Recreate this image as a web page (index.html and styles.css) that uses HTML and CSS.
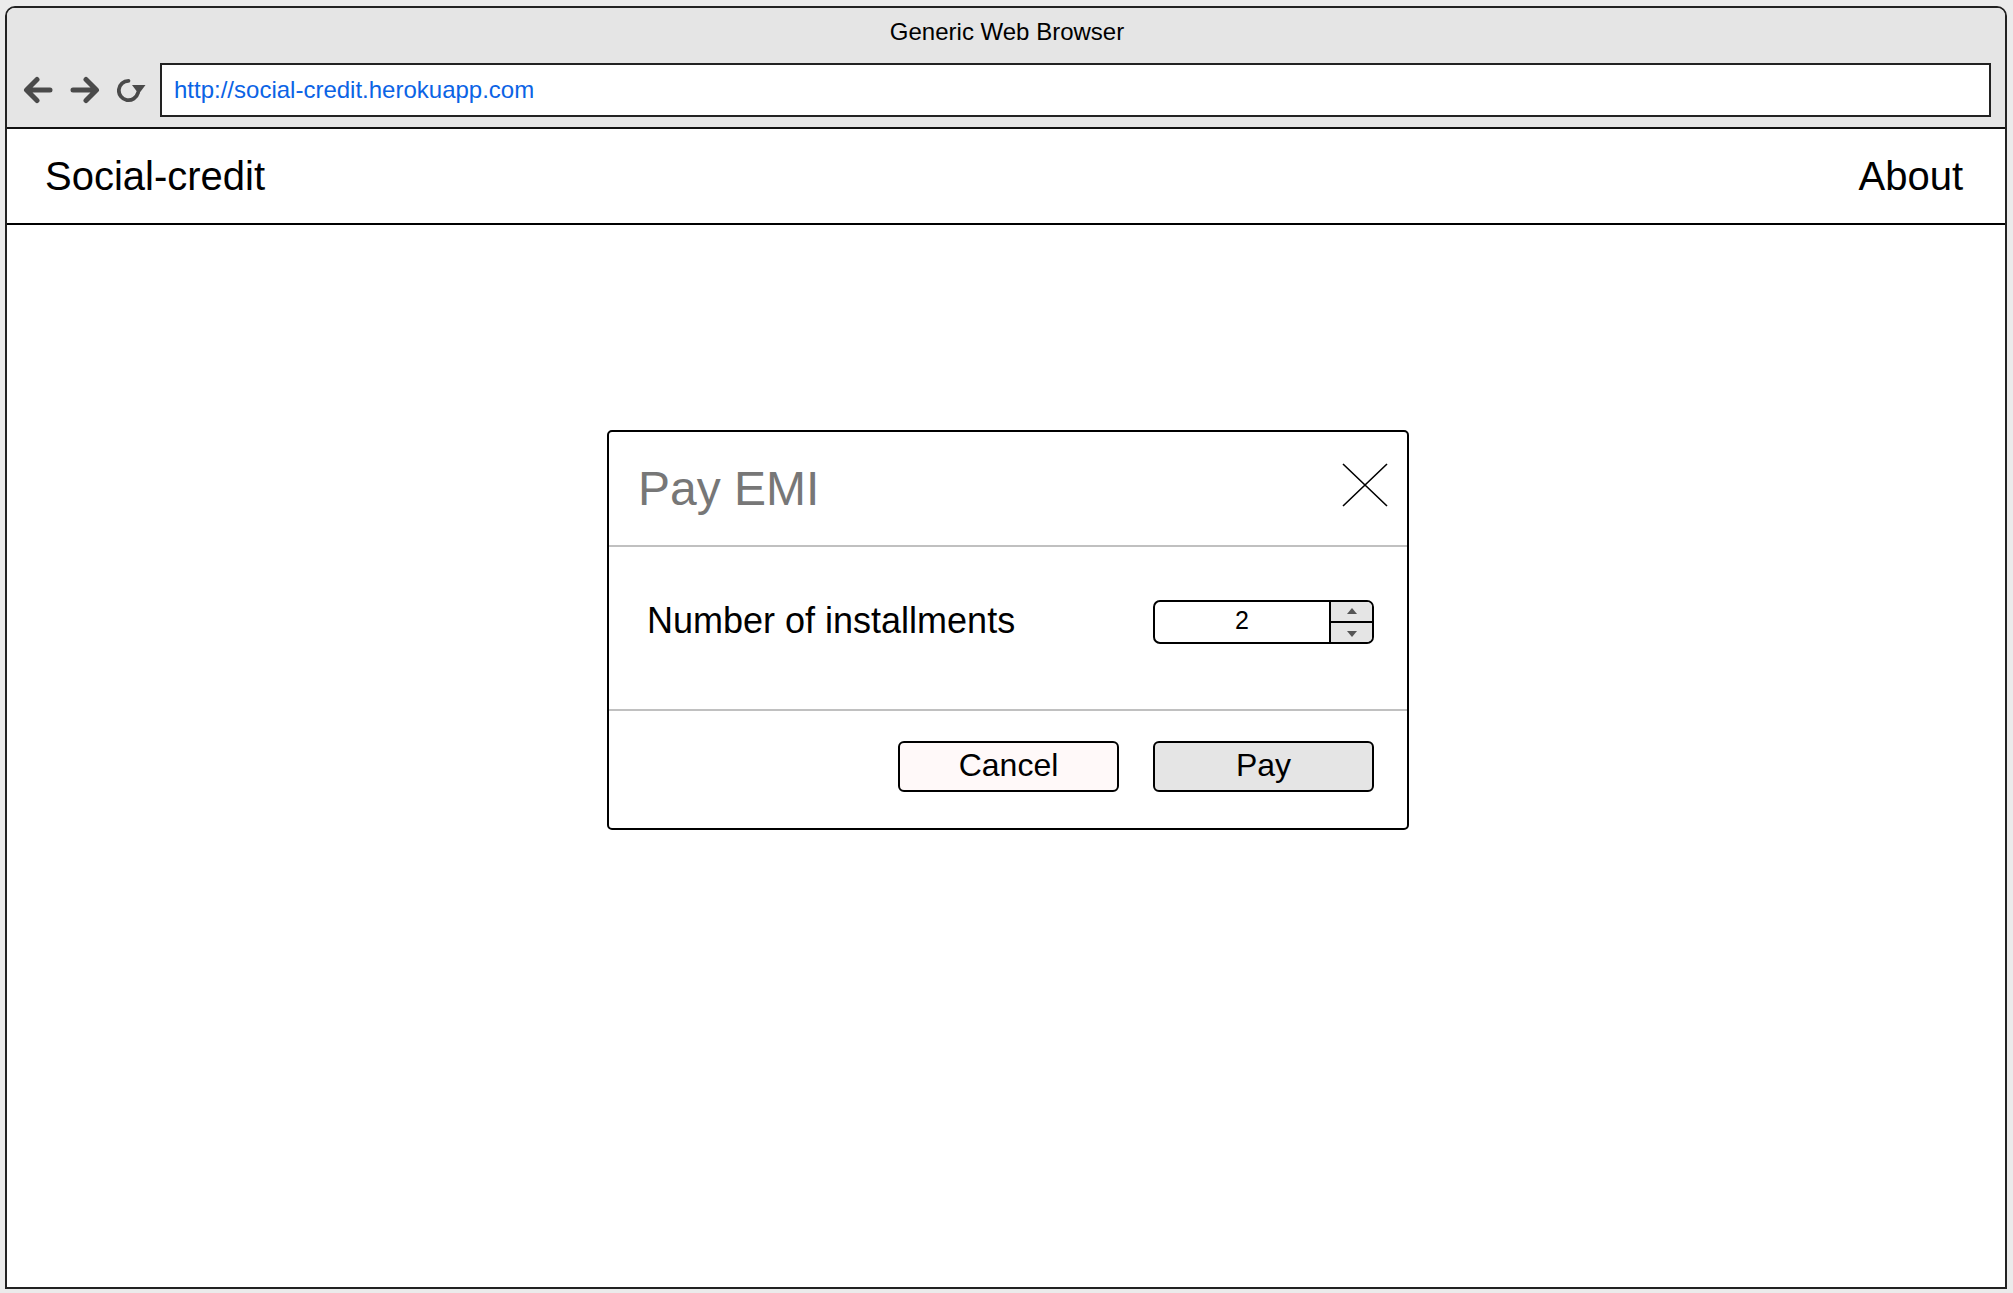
FILE: index.html
```html
<!DOCTYPE html>
<html lang="en">
<head>
<meta charset="utf-8">
<title>Social-credit</title>
<link rel="stylesheet" href="styles.css">
</head>
<body>
<div class="frame">
  <header class="titlebar">
    <div class="window-title">Generic Web Browser</div>
    <div class="toolbar">
      <svg class="nav-icon back" width="30" height="28" viewBox="0 0 30 28" aria-hidden="true">
        <path d="M27 14H4M14 3.5L3.5 14L14 24.5" fill="none" stroke="#4a4a4a" stroke-width="5" stroke-linecap="round" stroke-linejoin="round"/>
      </svg>
      <svg class="nav-icon fwd" width="31" height="28" viewBox="0 0 31 28" aria-hidden="true">
        <path d="M3 14H26M16 3.5L26.5 14L16 24.5" fill="none" stroke="#4a4a4a" stroke-width="5" stroke-linecap="round" stroke-linejoin="round"/>
      </svg>
      <svg class="nav-icon reload" width="30" height="25" viewBox="0 0 30 25" aria-hidden="true">
        <path d="M11.5 2.8A9.7 9.7 0 1 0 20.9 15" fill="none" stroke="#4a4a4a" stroke-width="3.8" stroke-linecap="round"/>
        <path d="M15 7L28.5 7L21.75 16Z" fill="#4a4a4a"/>
      </svg>
      <div class="address">http://social-credit.herokuapp.com</div>
    </div>
  </header>
  <nav class="navbar">
    <span class="brand">Social-credit</span>
    <span class="nav-link">About</span>
  </nav>
  <main class="content">
    <section class="dialog">
      <div class="dialog-head">
        <h1 class="dialog-title">Pay EMI</h1>
        <svg class="close" width="46" height="44" viewBox="0 0 46 44" aria-hidden="true">
          <path d="M1 1L45 43M45 1L1 43" stroke="#000" stroke-width="1.6" fill="none"/>
        </svg>
      </div>
      <div class="dialog-body">
        <span class="field-label">Number of installments</span>
        <div class="spinner">
          <span class="spin-value">2</span>
          <div class="spin-btns">
            <span class="spin-btn"><span class="tri up"></span></span>
            <span class="spin-btn"><span class="tri down"></span></span>
          </div>
        </div>
      </div>
      <div class="dialog-foot">
        <button class="btn btn-cancel">Cancel</button>
        <button class="btn btn-pay">Pay</button>
      </div>
    </section>
  </main>
</div>
</body>
</html>
```
FILE: styles.css
```css
* { box-sizing: border-box; }

html, body {
  margin: 0;
  height: 1293px;
}

body {
  background: #ebebeb;
  padding: 6px 6px 4px 5px;
  font-family: "Liberation Sans", Arial, Helvetica, sans-serif;
  color: #000;
}

.frame {
  height: 100%;
  border: 2px solid #222;
  border-radius: 10px 10px 0 0;
  background: #fff;
  display: flex;
  flex-direction: column;
  overflow: hidden;
}

.titlebar {
  background: #e5e5e5;
  height: 121px;
  border-bottom: 2px solid #111;
  padding: 12px 14px 10px 16px;
  flex: none;
}

.window-title {
  font-size: 24px;
  line-height: 24px;
  text-align: center;
  margin-bottom: 19px;
}

.toolbar {
  display: flex;
  align-items: center;
  height: 54px;
}

.nav-icon { display: block; flex: none; }
.back { margin-right: 17px; }
.fwd { margin-right: 16px; }
.reload { margin-right: 13px; }

.address {
  flex: 1;
  height: 54px;
  border: 2px solid #222;
  background: #fff;
  display: flex;
  align-items: center;
  padding-left: 12px;
  font-size: 24px;
  line-height: 24px;
  color: #0b63e5;
}

.navbar {
  flex: none;
  height: 96px;
  border-bottom: 2px solid #000;
  display: flex;
  align-items: center;
  justify-content: space-between;
  padding: 0 42px 0 38px;
  font-size: 40px;
  line-height: 40px;
}

.content {
  flex: 1;
  padding: 205px 0 0 600px;
}

.dialog {
  width: 802px;
  height: 400px;
  border: 2px solid #000;
  border-radius: 5px;
  display: flex;
  flex-direction: column;
}

.dialog-head {
  height: 115px;
  border-bottom: 2px solid #c0c0c0;
  display: flex;
  align-items: center;
  justify-content: space-between;
  padding: 0 19px 0 29px;
}

.dialog-title {
  margin: 0;
  font-weight: normal;
  font-size: 48px;
  line-height: 48px;
  color: #777;
}

.close {
  display: block;
  margin-bottom: 7px;
}

.dialog-body {
  height: 164px;
  border-bottom: 2px solid #c0c0c0;
  display: flex;
  align-items: center;
  justify-content: space-between;
  align-content: flex-start;
  padding: 53px 33px 0 38px;
  flex-wrap: wrap;
}

.field-label {
  font-size: 36px;
  line-height: 36px;
  margin-top: -2px;
}

.spinner {
  width: 221px;
  height: 44px;
  border: 2px solid #000;
  border-radius: 7px;
  overflow: hidden;
  display: flex;
}

.spin-value {
  flex: 1;
  display: flex;
  align-items: center;
  justify-content: center;
  font-size: 25px;
  line-height: 25px;
  padding-bottom: 3px;
}

.spin-btns {
  width: 43px;
  border-left: 2px solid #000;
  background: #e5e5e5;
  display: flex;
  flex-direction: column;
}

.spin-btn {
  flex: 1;
  display: flex;
  align-items: center;
  justify-content: center;
}

.spin-btn + .spin-btn { border-top: 2px solid #000; }

.tri {
  width: 0;
  height: 0;
  border-left: 5.5px solid transparent;
  border-right: 5.5px solid transparent;
}
.tri.up { border-bottom: 6px solid #555; margin-top: -2px; }
.tri.down { border-top: 6px solid #555; margin-top: 2px; }

.dialog-foot {
  flex: 1;
  display: flex;
  justify-content: flex-end;
  align-items: flex-start;
  gap: 34px;
  padding: 30px 33px 0 0;
}

.btn {
  width: 221px;
  height: 51px;
  border: 2px solid #000;
  border-radius: 6px;
  font-family: "Liberation Sans", Arial, Helvetica, sans-serif;
  font-size: 32px;
  line-height: 32px;
  color: #000;
  padding: 0 0 4px;
}

.btn-cancel { background: #fff9f9; }
.btn-pay { background: #e5e5e5; }
```
